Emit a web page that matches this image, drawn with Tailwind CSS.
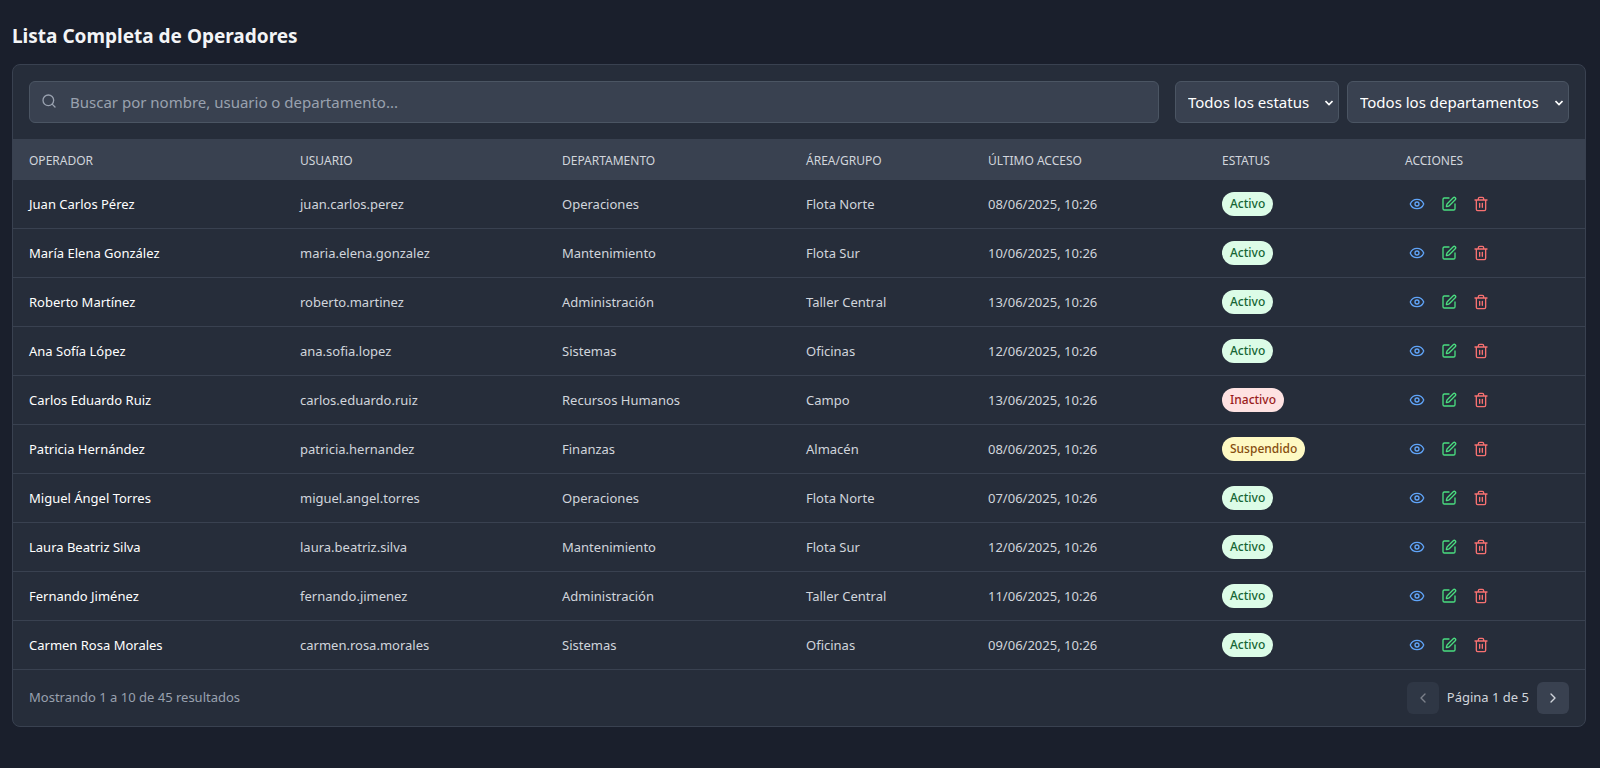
<!DOCTYPE html>
<html lang="es">

<head>
    <meta charset="UTF-8">
    <meta name="viewport" content="width=device-width, initial-scale=1.0">
    <title>Lista Completa de Operadores</title>
    <script src="https://cdn.jsdelivr.net/npm/@tailwindcss/browser@4"></script>
</head>

<body class="bg-[#1a1f2c] min-h-screen pt-[22px] pl-3 pr-3.5 font-['Noto_Sans',sans-serif] text-gray-100">
    <svg class="hidden">
        <symbol id="icon-eye" viewBox="0 0 24 24">
            <path d="M2.06 12.35a1 1 0 0 1 0-.7 10.75 10.75 0 0 1 19.88 0 1 1 0 0 1 0 .7 10.75 10.75 0 0 1-19.88 0" />
            <circle cx="12" cy="12" r="3" />
        </symbol>
        <symbol id="icon-edit" viewBox="0 0 24 24">
            <path d="M12 3H5a2 2 0 0 0-2 2v14a2 2 0 0 0 2 2h14a2 2 0 0 0 2-2v-7" />
            <path d="M18.375 2.625a1 1 0 0 1 3 3l-9.013 9.014a2 2 0 0 1-.853.505l-2.873.84a.5.5 0 0 1-.62-.62l.84-2.873a2 2 0 0 1 .506-.852z" />
        </symbol>
        <symbol id="icon-trash" viewBox="0 0 24 24">
            <path d="M3 6h18M19 6v14a2 2 0 0 1-2 2H7a2 2 0 0 1-2-2V6M8 6V4a2 2 0 0 1 2-2h4a2 2 0 0 1 2 2v2M10 11v6M14 11v6" />
        </symbol>
    </svg>

    <h1 class="text-[19px] leading-7 font-bold mb-3.5">Lista Completa de Operadores</h1>

    <div class="bg-[#262d3a] border border-[#394150] rounded-lg overflow-hidden">
        <div class="flex gap-4 p-4">
            <div class="relative flex-1">
                <svg class="absolute left-3 top-3 size-4 text-gray-400" viewBox="0 0 24 24" fill="none" stroke="currentColor" stroke-width="2" stroke-linecap="round" stroke-linejoin="round">
                    <circle cx="11" cy="11" r="8" />
                    <path d="m21 21-4.3-4.3" />
                </svg>
                <input id="buscar" type="text" aria-label="Buscar operadores" placeholder="Buscar por nombre, usuario o departamento..."
                    class="w-full h-[42px] pl-10 pr-4 bg-[#394150] border border-[#4b5563] rounded-md text-[15px] placeholder-gray-400">
            </div>
            <div class="flex gap-2">
                <div class="relative">
                    <select id="estatus" aria-label="Estatus" class="appearance-none w-41 h-[42px] px-3 bg-[#394150] border border-[#4b5563] rounded-md text-[15px] text-white">
                        <option>Todos los estatus</option>
                        <option>Activo</option>
                        <option>Inactivo</option>
                        <option>Suspendido</option>
                    </select>
                    <svg class="absolute right-1.5 top-[19px] w-2 h-1.5 pointer-events-none" viewBox="0 0 8 6" fill="none" stroke="white" stroke-width="1.6"><path d="M.5 1 4 4.5 7.5 1" /></svg>
                </div>
                <div class="relative">
                    <select id="departamento" aria-label="Departamento" class="appearance-none w-[222px] h-[42px] px-3 bg-[#394150] border border-[#4b5563] rounded-md text-[15px] text-white">
                        <option>Todos los departamentos</option>
                        <option>Operaciones</option>
                        <option>Mantenimiento</option>
                        <option>Administración</option>
                        <option>Sistemas</option>
                        <option>Recursos Humanos</option>
                        <option>Finanzas</option>
                    </select>
                    <svg class="absolute right-1.5 top-[19px] w-2 h-1.5 pointer-events-none" viewBox="0 0 8 6" fill="none" stroke="white" stroke-width="1.6"><path d="M.5 1 4 4.5 7.5 1" /></svg>
                </div>
            </div>
        </div>

        <table class="w-full table-fixed border-separate border-spacing-0 text-left">
            <colgroup>
                <col class="w-[271px]">
                <col class="w-[262px]">
                <col class="w-[244px]">
                <col class="w-[182px]">
                <col class="w-[234px]">
                <col class="w-[183px]">
                <col class="w-[196px]">
            </colgroup>
            <thead class="bg-[#394150] text-xs uppercase text-gray-300">
                <tr class="h-[41px]">
                    <th class="px-4 pt-0.5 font-normal">Operador</th>
                    <th class="px-4 pt-0.5 font-normal">Usuario</th>
                    <th class="px-4 pt-0.5 font-normal">Departamento</th>
                    <th class="px-4 pt-0.5 font-normal">Área/Grupo</th>
                    <th class="px-4 pt-0.5 font-normal">Último acceso</th>
                    <th class="px-4 pt-0.5 font-normal">Estatus</th>
                    <th class="px-4 pt-0.5 font-normal">Acciones</th>
                </tr>
            </thead>
            <tbody id="filas" class="text-[13px] text-gray-300"></tbody>
        </table>

        <div class="flex items-center justify-between px-4 py-3 text-[13px]">
            <p class="text-gray-400">Mostrando 1 a 10 de 45 resultados</p>
            <div class="flex items-center gap-2">
                <button disabled aria-label="Página anterior" class="size-8 flex items-center justify-center rounded-md bg-[#394150] text-gray-300 opacity-50">
                    <svg class="size-4" viewBox="0 0 24 24" fill="none" stroke="currentColor" stroke-width="2" stroke-linecap="round" stroke-linejoin="round"><path d="m15 18-6-6 6-6" /></svg>
                </button>
                <span class="text-gray-300">Página 1 de 5</span>
                <button aria-label="Página siguiente" class="size-8 flex items-center justify-center rounded-md bg-[#394150] text-gray-300">
                    <svg class="size-4" viewBox="0 0 24 24" fill="none" stroke="currentColor" stroke-width="2" stroke-linecap="round" stroke-linejoin="round"><path d="m9 18 6-6-6-6" /></svg>
                </button>
            </div>
        </div>
    </div>

    <script>
        const operadores = [
            ['Juan Carlos Pérez', 'juan.carlos.perez', 'Operaciones', 'Flota Norte', '08/06/2025, 10:26', 'Activo'],
            ['María Elena González', 'maria.elena.gonzalez', 'Mantenimiento', 'Flota Sur', '10/06/2025, 10:26', 'Activo'],
            ['Roberto Martínez', 'roberto.martinez', 'Administración', 'Taller Central', '13/06/2025, 10:26', 'Activo'],
            ['Ana Sofía López', 'ana.sofia.lopez', 'Sistemas', 'Oficinas', '12/06/2025, 10:26', 'Activo'],
            ['Carlos Eduardo Ruiz', 'carlos.eduardo.ruiz', 'Recursos Humanos', 'Campo', '13/06/2025, 10:26', 'Inactivo'],
            ['Patricia Hernández', 'patricia.hernandez', 'Finanzas', 'Almacén', '08/06/2025, 10:26', 'Suspendido'],
            ['Miguel Ángel Torres', 'miguel.angel.torres', 'Operaciones', 'Flota Norte', '07/06/2025, 10:26', 'Activo'],
            ['Laura Beatriz Silva', 'laura.beatriz.silva', 'Mantenimiento', 'Flota Sur', '12/06/2025, 10:26', 'Activo'],
            ['Fernando Jiménez', 'fernando.jimenez', 'Administración', 'Taller Central', '11/06/2025, 10:26', 'Activo'],
            ['Carmen Rosa Morales', 'carmen.rosa.morales', 'Sistemas', 'Oficinas', '09/06/2025, 10:26', 'Activo'],
        ];

        const colores = {
            Activo: 'bg-[#dcfce7] text-[#166534]',
            Inactivo: 'bg-[#fee2e2] text-[#991b1b]',
            Suspendido: 'bg-[#fef9c3] text-[#854d0e]',
        };

        function icono(nombre) {
            return `<svg class="size-4" fill="none" stroke="currentColor" stroke-width="2" stroke-linecap="round" stroke-linejoin="round"><use href="#icon-${nombre}"/></svg>`;
        }

        document.getElementById('filas').innerHTML = operadores.map(([nombre, usuario, depto, area, acceso, estatus]) => `
            <tr class="h-[49px]">
                <td class="px-4 pt-0.5 border-b border-[#394150] text-white">${nombre}</td>
                <td class="px-4 pt-0.5 border-b border-[#394150]">${usuario}</td>
                <td class="px-4 pt-0.5 border-b border-[#394150]">${depto}</td>
                <td class="px-4 pt-0.5 border-b border-[#394150]">${area}</td>
                <td class="px-4 pt-0.5 border-b border-[#394150]">${acceso}</td>
                <td class="px-4 border-b border-[#394150]">
                    <div class="flex"><span class="px-2 py-1 rounded-full text-xs font-medium ${colores[estatus]}">${estatus}</span></div>
                </td>
                <td class="px-4 border-b border-[#394150]">
                    <div class="flex gap-2">
                        <button aria-label="Ver" class="p-1 text-[#60a5fa]">${icono('eye')}</button>
                        <button aria-label="Editar" class="p-1 text-[#4ade80]">${icono('edit')}</button>
                        <button aria-label="Eliminar" class="p-1 text-[#f87171]">${icono('trash')}</button>
                    </div>
                </td>
            </tr>`).join('');
    </script>
</body>

</html>
